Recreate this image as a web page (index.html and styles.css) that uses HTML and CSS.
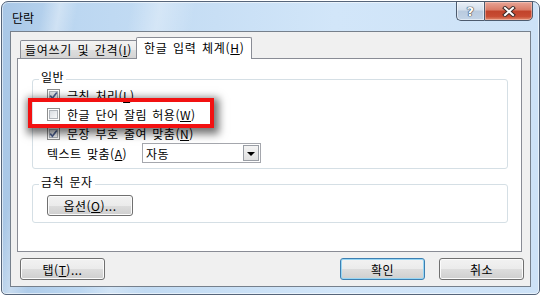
FILE: index.html
```html
<!DOCTYPE html>
<html lang="ko">
<head>
    <meta charset="UTF-8">
    <title>단락</title>
    <link rel="stylesheet" href="styles.css">
</head>
<body>
    <div class="window">
        <div class="titlebar">
            <span class="title">단락</span>
            <div class="caption-buttons">
                <span class="cap-btn help">?</span>
                <span class="cap-btn close">
                    <svg width="14" height="11" viewBox="0 0 14 11">
                        <path d="M3 2 L11 9 M11 2 L3 9" stroke="#3b2a28" stroke-width="4" stroke-linecap="square"/>
                        <path d="M3 2 L11 9 M11 2 L3 9" stroke="#fff" stroke-width="2" stroke-linecap="square"/>
                    </svg>
                </span>
            </div>
        </div>

        <div class="client">
            <div class="tabs">
                <div class="tab">들여쓰기 및 간격(<u>I</u>)</div>
                <div class="tab active">한글 입력 체계(<u>H</u>)</div>
            </div>

            <div class="panel">
                <fieldset class="group">
                    <legend>일반</legend>
                    <div class="check">
                        <span class="box">
                            <svg width="9" height="9" viewBox="0 0 9 9"><path d="M1.2 4.6 L3.4 7.2 L7.8 1.4" stroke="#4b5e8f" stroke-width="1.7" fill="none"/></svg>
                        </span>
                        금칙 처리(<u>L</u>)
                    </div>
                    <div class="check">
                        <span class="box"></span>
                        한글 단어 잘림 허용(<u>W</u>)
                    </div>
                    <div class="check">
                        <span class="box">
                            <svg width="9" height="9" viewBox="0 0 9 9"><path d="M1.2 4.6 L3.4 7.2 L7.8 1.4" stroke="#4b5e8f" stroke-width="1.7" fill="none"/></svg>
                        </span>
                        문장 부호 줄여 맞춤(<u>N</u>)
                    </div>
                    <div class="align-row">
                        <span class="align-label">텍스트 맞춤(<u>A</u>)</span>
                        <div class="combo">
                            <span class="combo-text">자동</span>
                            <span class="combo-drop"><span class="arrow"></span></span>
                        </div>
                    </div>
                </fieldset>

                <fieldset class="group group-chars">
                    <legend>금칙 문자</legend>
                    <button class="btn btn-option" type="button">옵션(<u>O</u>)...</button>
                </fieldset>

                <!-- annotation drawn over the dialog -->
                <div class="highlight"></div>
            </div>

            <div class="footer">
                <button class="btn" type="button">탭(<u>T</u>)...</button>
                <button class="btn btn-default" type="button">확인</button>
                <button class="btn btn-cancel" type="button">취소</button>
            </div>
        </div>
    </div>
</body>
</html>
```

FILE: styles.css
```css
* {
    box-sizing: border-box;
}

body {
    margin: 0;
    background: #fff;
    font-family: "Noto Sans CJK KR", "Liberation Sans", sans-serif;
    font-size: 12px;
    letter-spacing: 0.5px;
    word-spacing: 1.5px;
    color: #000;
}

u {
    text-decoration: underline;
    text-underline-offset: 1px;
}

.window {
    margin: 1px 0 0 1px;
    width: 539px;
    height: 294px;
    padding: 0 8px 7px 8px;
    border: 1px solid #56657a;
    border-radius: 7px 7px 5px 5px;
    display: flex;
    flex-direction: column;
    box-shadow: inset 0 0 0 1px rgba(255, 255, 255, 0.55);
    background:
        linear-gradient(100deg, transparent 0 7%, rgba(255, 255, 255, 0.35) 10%, transparent 13%,
            transparent 22%, rgba(255, 255, 255, 0.3) 27%, transparent 33%),
        linear-gradient(to right, #a9c7e6 0%, #bcd7f1 14%, #c8dff5 40%, #d2e6f9 62%, #cde2f7 100%);
}

/* title bar */
.titlebar {
    height: 29px;
    display: flex;
    align-items: flex-start;
}

.title {
    padding: 8px 0 0 2px;
    line-height: 16px;
    letter-spacing: 0;
}

.caption-buttons {
    margin: -1px -2px 0 auto;
    display: flex;
    height: 20px;
}

.cap-btn {
    display: flex;
    align-items: center;
    justify-content: center;
    height: 20px;
    border: 1px solid #4d5b6e;
}

.help {
    width: 28px;
    border-right: none;
    border-radius: 0 0 0 5px;
    color: #fff;
    font-family: "DejaVu Sans", sans-serif;
    font-weight: bold;
    font-size: 13px;
    text-shadow: 0 0 1px #2b3747, 0 0 1px #2b3747, 0 0 1px #2b3747;
    background: linear-gradient(#e9eff7 0%, #d3dfec 45%, #b9cade 50%, #c3d4e7 100%);
    box-shadow: inset 0 0 0 1px rgba(255, 255, 255, 0.5);
}

.close {
    width: 49px;
    border-radius: 0 0 5px 0;
    background: linear-gradient(#e8a597 0%, #d97a66 45%, #c1432b 50%, #c84c33 80%, #e08a6e 100%);
    box-shadow: inset 0 0 0 1px rgba(255, 220, 210, 0.45);
}

/* client area */
.client {
    height: 256px;
    border: 1px solid #76808c;
    background: #f0f0f0;
    padding: 5px 8px 0 6px;
}

.tabs {
    height: 22px;
    display: flex;
    align-items: flex-end;
    padding-left: 3px;
    position: relative;
    z-index: 1;
}

.tab {
    width: 118px;
    height: 18px;
    margin-bottom: 1px;
    padding: 1px 0 0 4px;
    line-height: 15px;
    letter-spacing: 0.7px;
    white-space: nowrap;
    border: 1px solid #898c95;
    border-bottom: none;
    border-radius: 2px 2px 0 0;
    background: linear-gradient(#f3f3f3 0%, #ebebeb 50%, #dedede 51%, #d4d4d4 100%);
}

.tab.active {
    width: 116px;
    height: 22px;
    margin: 0 0 0 -2px;
    padding: 2px 0 0 7px;
    background: #fff;
    position: relative;
}

.panel {
    margin-top: -1px;
    height: 194px;
    border: 1px solid #898c95;
    background: #fff;
    padding: 11px 13px 0 14px;
    position: relative;
}

.group {
    margin: 0;
    padding: 0 10px 5px 14px;
    border: 1px solid #d5dfe5;
    border-radius: 3px;
}

.group legend {
    margin-left: -8px;
    padding: 0 2px 4px;
    line-height: 14px;
}

.check {
    height: 19px;
    display: flex;
    align-items: center;
    white-space: nowrap;
}

.check:first-of-type {
    margin-top: -2px;
}

.box {
    width: 13px;
    height: 13px;
    margin-right: 7px;
    border: 1px solid #8e8f8f;
    background: #fff;
    padding: 1px;
    display: grid;
}

.box::before {
    content: "";
    grid-area: 1 / 1;
    border: 1px solid #aeb3b9;
    background: linear-gradient(135deg, #d9dde2, #f7f8f9);
}

.box svg {
    grid-area: 1 / 1;
    position: relative;
}

.align-row {
    height: 20px;
    display: flex;
    align-items: center;
}

.align-label {
    width: 95px;
    white-space: nowrap;
}

.combo {
    width: 119px;
    height: 20px;
    border: 1px solid #a5a7ad;
    background: #fff;
    display: flex;
    align-items: center;
    padding: 1px;
}

.combo-text {
    flex: 1;
    padding-left: 2px;
}

.combo-drop {
    width: 16px;
    height: 16px;
    border: 1px solid #9a9ea5;
    background: linear-gradient(#f4f4f4, #e0e0e0);
    display: flex;
    align-items: center;
    justify-content: center;
}

.arrow {
    width: 0;
    height: 0;
    border-left: 4px solid transparent;
    border-right: 4px solid transparent;
    border-top: 4px solid #000;
    margin-top: 1px;
}

.group-chars {
    margin-top: 6px;
    padding-bottom: 6px;
}

.btn {
    height: 22px;
    width: 85px;
    padding: 0;
    font-family: inherit;
    font-size: 12px;
    letter-spacing: 0.5px;
    color: #000;
    border: 1px solid #707070;
    border-radius: 3px;
    background: linear-gradient(#f2f2f2 0%, #ebebeb 50%, #dddddd 51%, #cfcfcf 100%);
    box-shadow: inset 0 0 0 1px #fbfbfb;
}

.btn-option {
    width: 86px;
    height: 21px;
    margin-top: 2px;
}

.highlight {
    position: absolute;
    left: 10px;
    top: 39px;
    width: 186px;
    height: 30px;
    border: 4px solid #f21111;
    box-shadow: 2px 3px 8px 3px rgba(0, 0, 0, 0.55);
}

/* bottom buttons */
.footer {
    display: flex;
    padding: 6px 0 0 3px;
    margin-right: -2px;
}

.btn-default {
    margin-left: auto;
    border-color: #3c7fb1;
    box-shadow: inset 0 0 0 1px #98d6f4;
}

.btn-cancel {
    margin-left: 14px;
}
```
